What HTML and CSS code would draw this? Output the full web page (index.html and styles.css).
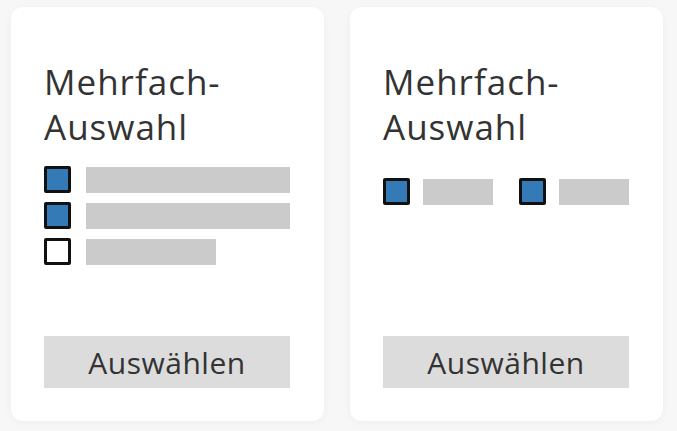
FILE: index.html
```html
<!DOCTYPE html>
<html lang="de">
<head>
  <meta charset="UTF-8">
  <title>Mehrfach-Auswahl</title>
  <link rel="stylesheet" href="styles.css">
</head>
<body>
  <div class="card">
    <h2 class="title">Mehrfach-<br>Auswahl</h2>
    <ul class="options">
      <li><span class="box checked"></span><span class="bar"></span></li>
      <li><span class="box checked"></span><span class="bar"></span></li>
      <li><span class="box"></span><span class="bar short"></span></li>
    </ul>
    <div class="button">Auswählen</div>
  </div>
  <div class="card">
    <h2 class="title">Mehrfach-<br>Auswahl</h2>
    <ul class="options inline">
      <li><span class="box checked"></span><span class="bar"></span></li>
      <li><span class="box checked"></span><span class="bar"></span></li>
    </ul>
    <div class="button">Auswählen</div>
  </div>
</body>
</html>
```

FILE: styles.css
```css
body {
  margin: 0;
  padding: 7px 14px 10px 11px;
  background: #f7f7f7;
  font-family: "Open Sans", sans-serif;
  color: #333;
  display: flex;
  gap: 26px;
  height: 431px;
  box-sizing: border-box;
}
.card {
  width: 313px;
  background: #fff;
  border-radius: 12px;
  box-shadow: 0 2px 8px rgba(0, 0, 0, 0.04);
  padding: 52px 34px 33px 33px;
  box-sizing: border-box;
  display: flex;
  flex-direction: column;
}
.title {
  margin: 0;
  font-size: 35px;
  font-weight: 400;
  line-height: 45px;
  letter-spacing: 1px;
}
.options {
  list-style: none;
  margin: 17px 0 0;
  padding: 0;
  display: flex;
  flex-direction: column;
  gap: 9px;
}
.options li {
  display: flex;
  align-items: center;
  gap: 15px;
}
.box {
  width: 21px;
  height: 21px;
  border: 3px solid #111;
  border-radius: 2px;
  background: #fff;
  flex: none;
}
.box.checked {
  background: #337ab7;
}
.bar {
  height: 26px;
  flex: 1;
  background: #cbcbcb;
}
.bar.short {
  flex: none;
  width: 130px;
}
.options.inline {
  flex-direction: row;
  gap: 26px;
  margin-top: 29px;
}
.options.inline li {
  flex: 1;
  gap: 13px;
}
.button {
  margin-top: auto;
  height: 52px;
  background: #dcdcdc;
  font-size: 30px;
  letter-spacing: 0.5px;
  display: flex;
  align-items: center;
  justify-content: center;
}
```
